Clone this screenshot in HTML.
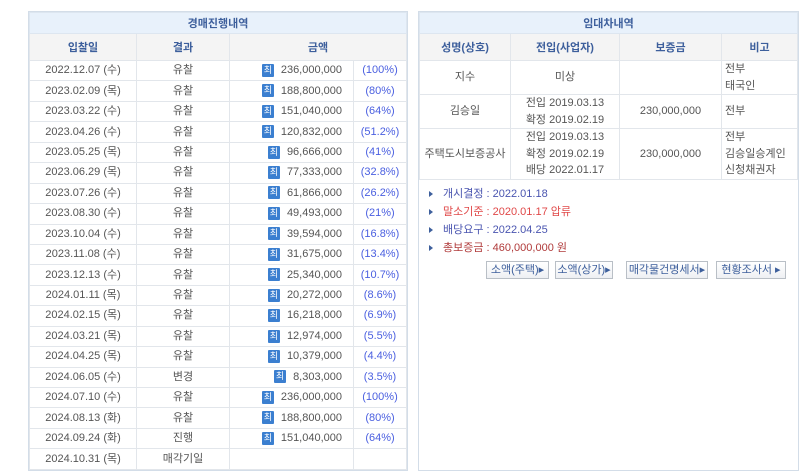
<!DOCTYPE html>
<html><head><meta charset="utf-8"><style>
*{margin:0;padding:0;box-sizing:border-box}
body{width:800px;height:455px;background:#fff;font-family:"Liberation Sans","Noto Sans CJK KR",sans-serif;font-size:11px;color:#555;position:relative;overflow:hidden}
.p{position:absolute;top:11px;border:1px solid #d3dde8;background:#fff}
table{border-collapse:collapse;width:100%;table-layout:fixed}
td,th{border:1px solid #e2e6eb;text-align:center;font-weight:normal;white-space:nowrap;overflow:hidden}
.t td{background:#e8f1fb;color:#3d5f9c;font-weight:bold;height:21px;border-color:#dde6f0;font-size:11px}
th{background:#f4f4f4;color:#3d5f9c;font-weight:bold;height:27px}
#L tr.r td{height:20.44px;line-height:19px}
.am{text-align:right;padding-right:11px}
.ic{display:inline-block;width:12px;height:13px;background:#3b7fd0;color:#fff;font-size:9px;line-height:13px;text-align:center;vertical-align:middle;margin-right:7px;border-radius:1px}
.pc{color:#4a5fe0}
#R td.l{text-align:left;padding-left:3px}
#R tr.r td{line-height:16.5px}
.info{padding:5px 0 0 8px;font-size:11px;line-height:18px}
.info div{padding-left:16px;position:relative}
.info div:before{content:"";position:absolute;left:2px;top:6px;border-left:4px solid #3d5f9c;border-top:3px solid transparent;border-bottom:3px solid transparent}
.b{position:absolute;top:261px;height:18px;border:1px solid #b9bfc6;background:linear-gradient(#fff,#eef0f3);color:#3d5f9c;font-size:11px;line-height:16px;text-align:center}
</style></head><body>
<div class="p" style="left:28px;width:380px;height:460px">
<table id="L">
<colgroup><col style="width:107px"><col style="width:93px"><col style="width:124px"><col></colgroup>
<tr class="t"><td colspan="4">경매진행내역</td></tr>
<tr><th>입찰일</th><th>결과</th><th colspan="2">금액</th></tr>
<tr class="r"><td>2022.12.07 (수)</td><td>유찰</td><td class="am"><span class="ic">최</span>236,000,000</td><td class="pc">(100%)</td></tr>
<tr class="r"><td>2023.02.09 (목)</td><td>유찰</td><td class="am"><span class="ic">최</span>188,800,000</td><td class="pc">(80%)</td></tr>
<tr class="r"><td>2023.03.22 (수)</td><td>유찰</td><td class="am"><span class="ic">최</span>151,040,000</td><td class="pc">(64%)</td></tr>
<tr class="r"><td>2023.04.26 (수)</td><td>유찰</td><td class="am"><span class="ic">최</span>120,832,000</td><td class="pc">(51.2%)</td></tr>
<tr class="r"><td>2023.05.25 (목)</td><td>유찰</td><td class="am"><span class="ic">최</span>96,666,000</td><td class="pc">(41%)</td></tr>
<tr class="r"><td>2023.06.29 (목)</td><td>유찰</td><td class="am"><span class="ic">최</span>77,333,000</td><td class="pc">(32.8%)</td></tr>
<tr class="r"><td>2023.07.26 (수)</td><td>유찰</td><td class="am"><span class="ic">최</span>61,866,000</td><td class="pc">(26.2%)</td></tr>
<tr class="r"><td>2023.08.30 (수)</td><td>유찰</td><td class="am"><span class="ic">최</span>49,493,000</td><td class="pc">(21%)</td></tr>
<tr class="r"><td>2023.10.04 (수)</td><td>유찰</td><td class="am"><span class="ic">최</span>39,594,000</td><td class="pc">(16.8%)</td></tr>
<tr class="r"><td>2023.11.08 (수)</td><td>유찰</td><td class="am"><span class="ic">최</span>31,675,000</td><td class="pc">(13.4%)</td></tr>
<tr class="r"><td>2023.12.13 (수)</td><td>유찰</td><td class="am"><span class="ic">최</span>25,340,000</td><td class="pc">(10.7%)</td></tr>
<tr class="r"><td>2024.01.11 (목)</td><td>유찰</td><td class="am"><span class="ic">최</span>20,272,000</td><td class="pc">(8.6%)</td></tr>
<tr class="r"><td>2024.02.15 (목)</td><td>유찰</td><td class="am"><span class="ic">최</span>16,218,000</td><td class="pc">(6.9%)</td></tr>
<tr class="r"><td>2024.03.21 (목)</td><td>유찰</td><td class="am"><span class="ic">최</span>12,974,000</td><td class="pc">(5.5%)</td></tr>
<tr class="r"><td>2024.04.25 (목)</td><td>유찰</td><td class="am"><span class="ic">최</span>10,379,000</td><td class="pc">(4.4%)</td></tr>
<tr class="r"><td>2024.06.05 (수)</td><td>변경</td><td class="am"><span class="ic">최</span>8,303,000</td><td class="pc">(3.5%)</td></tr>
<tr class="r"><td>2024.07.10 (수)</td><td>유찰</td><td class="am"><span class="ic">최</span>236,000,000</td><td class="pc">(100%)</td></tr>
<tr class="r"><td>2024.08.13 (화)</td><td>유찰</td><td class="am"><span class="ic">최</span>188,800,000</td><td class="pc">(80%)</td></tr>
<tr class="r"><td>2024.09.24 (화)</td><td>진행</td><td class="am"><span class="ic">최</span>151,040,000</td><td class="pc">(64%)</td></tr>
<tr class="r"><td>2024.10.31 (목)</td><td>매각기일</td><td class="am"></td><td></td></tr>
</table></div>
<div class="p" id="R" style="left:418px;width:381px;height:460px">
<table>
<colgroup><col style="width:91px"><col style="width:109px"><col style="width:102px"><col></colgroup>
<tr class="t"><td colspan="4">임대차내역</td></tr>
<tr><th>성명(상호)</th><th>전입(사업자)</th><th>보증금</th><th>비고</th></tr>
<tr class="r" style="height:32px"><td>지수</td><td>미상</td><td></td><td class="l">전부<br>태국인</td></tr>
<tr class="r" style="height:33px"><td>김승일</td><td>전입 2019.03.13<br>확정 2019.02.19</td><td>230,000,000</td><td class="l">전부</td></tr>
<tr class="r" style="height:50px"><td>주택도시보증공사</td><td>전입 2019.03.13<br>확정 2019.02.19<br>배당 2022.01.17</td><td>230,000,000</td><td class="l">전부<br>김승일승계인<br>신청채권자</td></tr>
</table>
<div class="info">
<div style="color:#4a55b0">개시결정 : 2022.01.18</div>
<div style="color:#e04848">말소기준 : 2020.01.17 압류</div>
<div style="color:#4a55b0">배당요구 : 2022.04.25</div>
<div style="color:#b03a3a">총보증금 : 460,000,000 원</div>
</div>
</div>
<div class="b" style="left:486px;width:63px">소액(주택)▸</div>
<div class="b" style="left:555px;width:58px">소액(상가)▸</div>
<div class="b" style="left:626px;width:82px">매각물건명세서▸</div>
<div class="b" style="left:716px;width:70px">현황조사서 ▸</div>
</body></html>
